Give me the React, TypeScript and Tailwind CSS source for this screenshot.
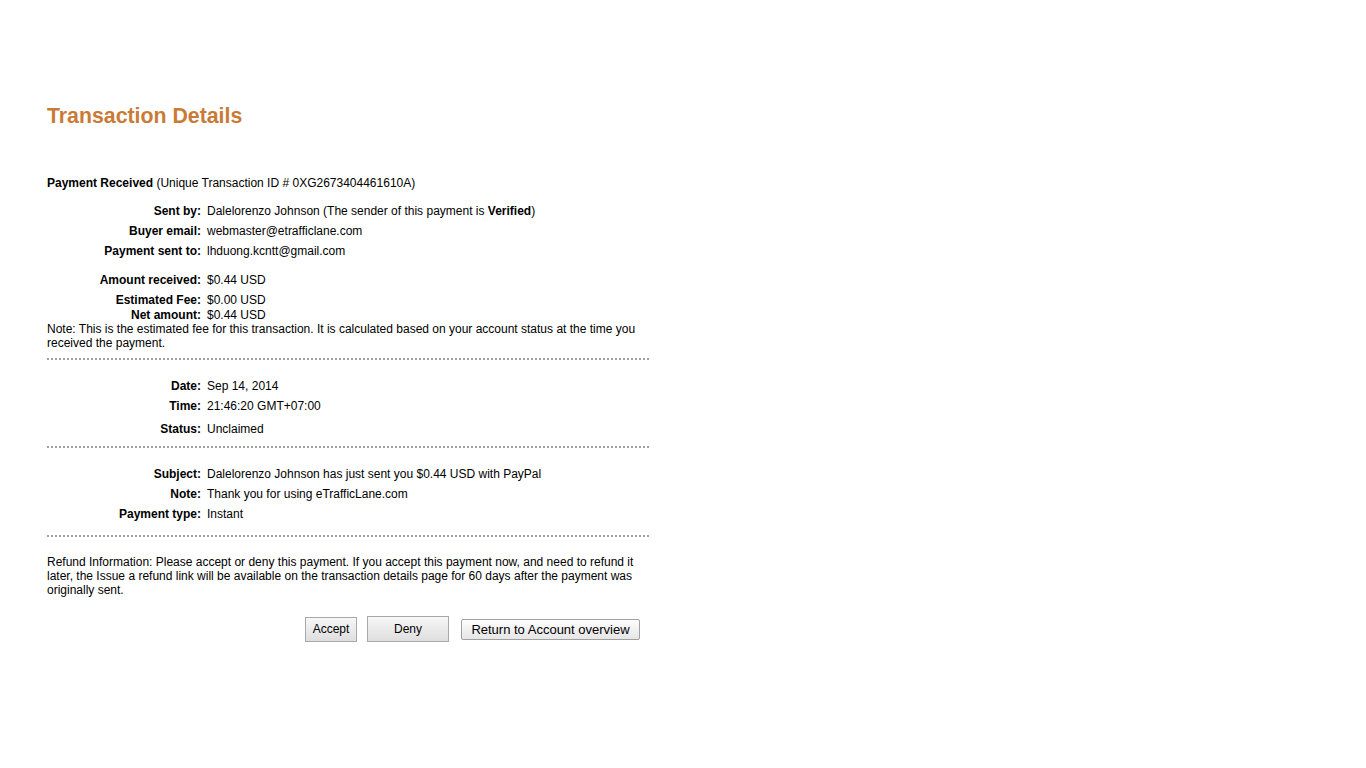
import React from "react";

const Row = ({ label, children, cls }: { label: string; children: React.ReactNode; cls: string }) => (
  <div className={`flex leading-[14px] ${cls}`}>
    <div className="w-[154px] shrink-0 text-right font-bold">{label}</div>
    <div className="pl-[6px]">{children}</div>
  </div>
);

const Dots = ({ cls }: { cls: string }) => (
  <div className={`h-[2px] w-[602px] bg-[linear-gradient(to_right,#a0a0a0_50%,transparent_50%)] bg-[length:4px_2px] ${cls}`} />
);

export default function App() {
  return (
    <div className="min-h-[768px] bg-white text-black text-[12px]" style={{ fontFamily: '"Liberation Sans", Arial, sans-serif' }}>
      <div className="pl-[47px] pt-[104px] w-[649px]">
        <h1 className="text-[21.3px] leading-[24px] font-bold text-[#c97b36]">Transaction Details</h1>
        <div className="mt-[48px] leading-[14px]">
          <span className="font-bold">Payment Received</span> (Unique Transaction ID # 0XG2673404461610A)
        </div>
        <Row label="Sent by:" cls="mt-[14px]">
          Dalelorenzo Johnson (The sender of this payment is <span className="font-bold">Verified</span>)
        </Row>
        <Row label="Buyer email:" cls="mt-[6px]">webmaster@etrafficlane.com</Row>
        <Row label="Payment sent to:" cls="mt-[6px]">lhduong.kcntt@gmail.com</Row>
        <Row label="Amount received:" cls="mt-[15px]">$0.44 USD</Row>
        <Row label="Estimated Fee:" cls="mt-[6px]">$0.00 USD</Row>
        <Row label="Net amount:" cls="mt-[1px]">$0.44 USD</Row>
        <p className="leading-[14px] w-[602px]">
          Note: This is the estimated fee for this transaction. It is calculated based on your account status at the time you received the payment.
        </p>
        <Dots cls="mt-[8px]" />
        <Row label="Date:" cls="mt-[19px]">Sep 14, 2014</Row>
        <Row label="Time:" cls="mt-[6px]">21:46:20 GMT+07:00</Row>
        <Row label="Status:" cls="mt-[9px]">Unclaimed</Row>
        <Dots cls="mt-[10px]" />
        <Row label="Subject:" cls="mt-[19px]">Dalelorenzo Johnson has just sent you $0.44 USD with PayPal</Row>
        <Row label="Note:" cls="mt-[6px]">Thank you for using eTrafficLane.com</Row>
        <Row label="Payment type:" cls="mt-[6px]">Instant</Row>
        <Dots cls="mt-[14px]" />
        <p className="mt-[18px] leading-[14px] w-[602px]">
          Refund Information: Please accept or deny this payment. If you accept this payment now, and need to refund it later, the Issue a refund link will be available on the transaction details page for 60 days after the payment was originally sent.
        </p>
        <div className="mt-[19px] flex items-center justify-end w-[593px]">
          <button className="h-[25px] w-[52px] border border-[#a8a8a8] bg-[linear-gradient(#f7f7f7,#dedede)] text-[12px] text-black">Accept</button>
          <button className="ml-[10px] h-[26px] w-[82px] border border-[#a8a8a8] bg-[linear-gradient(#f7f7f7,#dedede)] text-[12px] text-black">Deny</button>
          <button className="ml-[12px] h-[21px] w-[179px] border border-[#a0a0a0] rounded-[2px] bg-[linear-gradient(#fdfdfd,#e6e6e6)] text-[13px] text-black leading-[19px]">Return to Account overview</button>
        </div>
      </div>
    </div>
  );
}
